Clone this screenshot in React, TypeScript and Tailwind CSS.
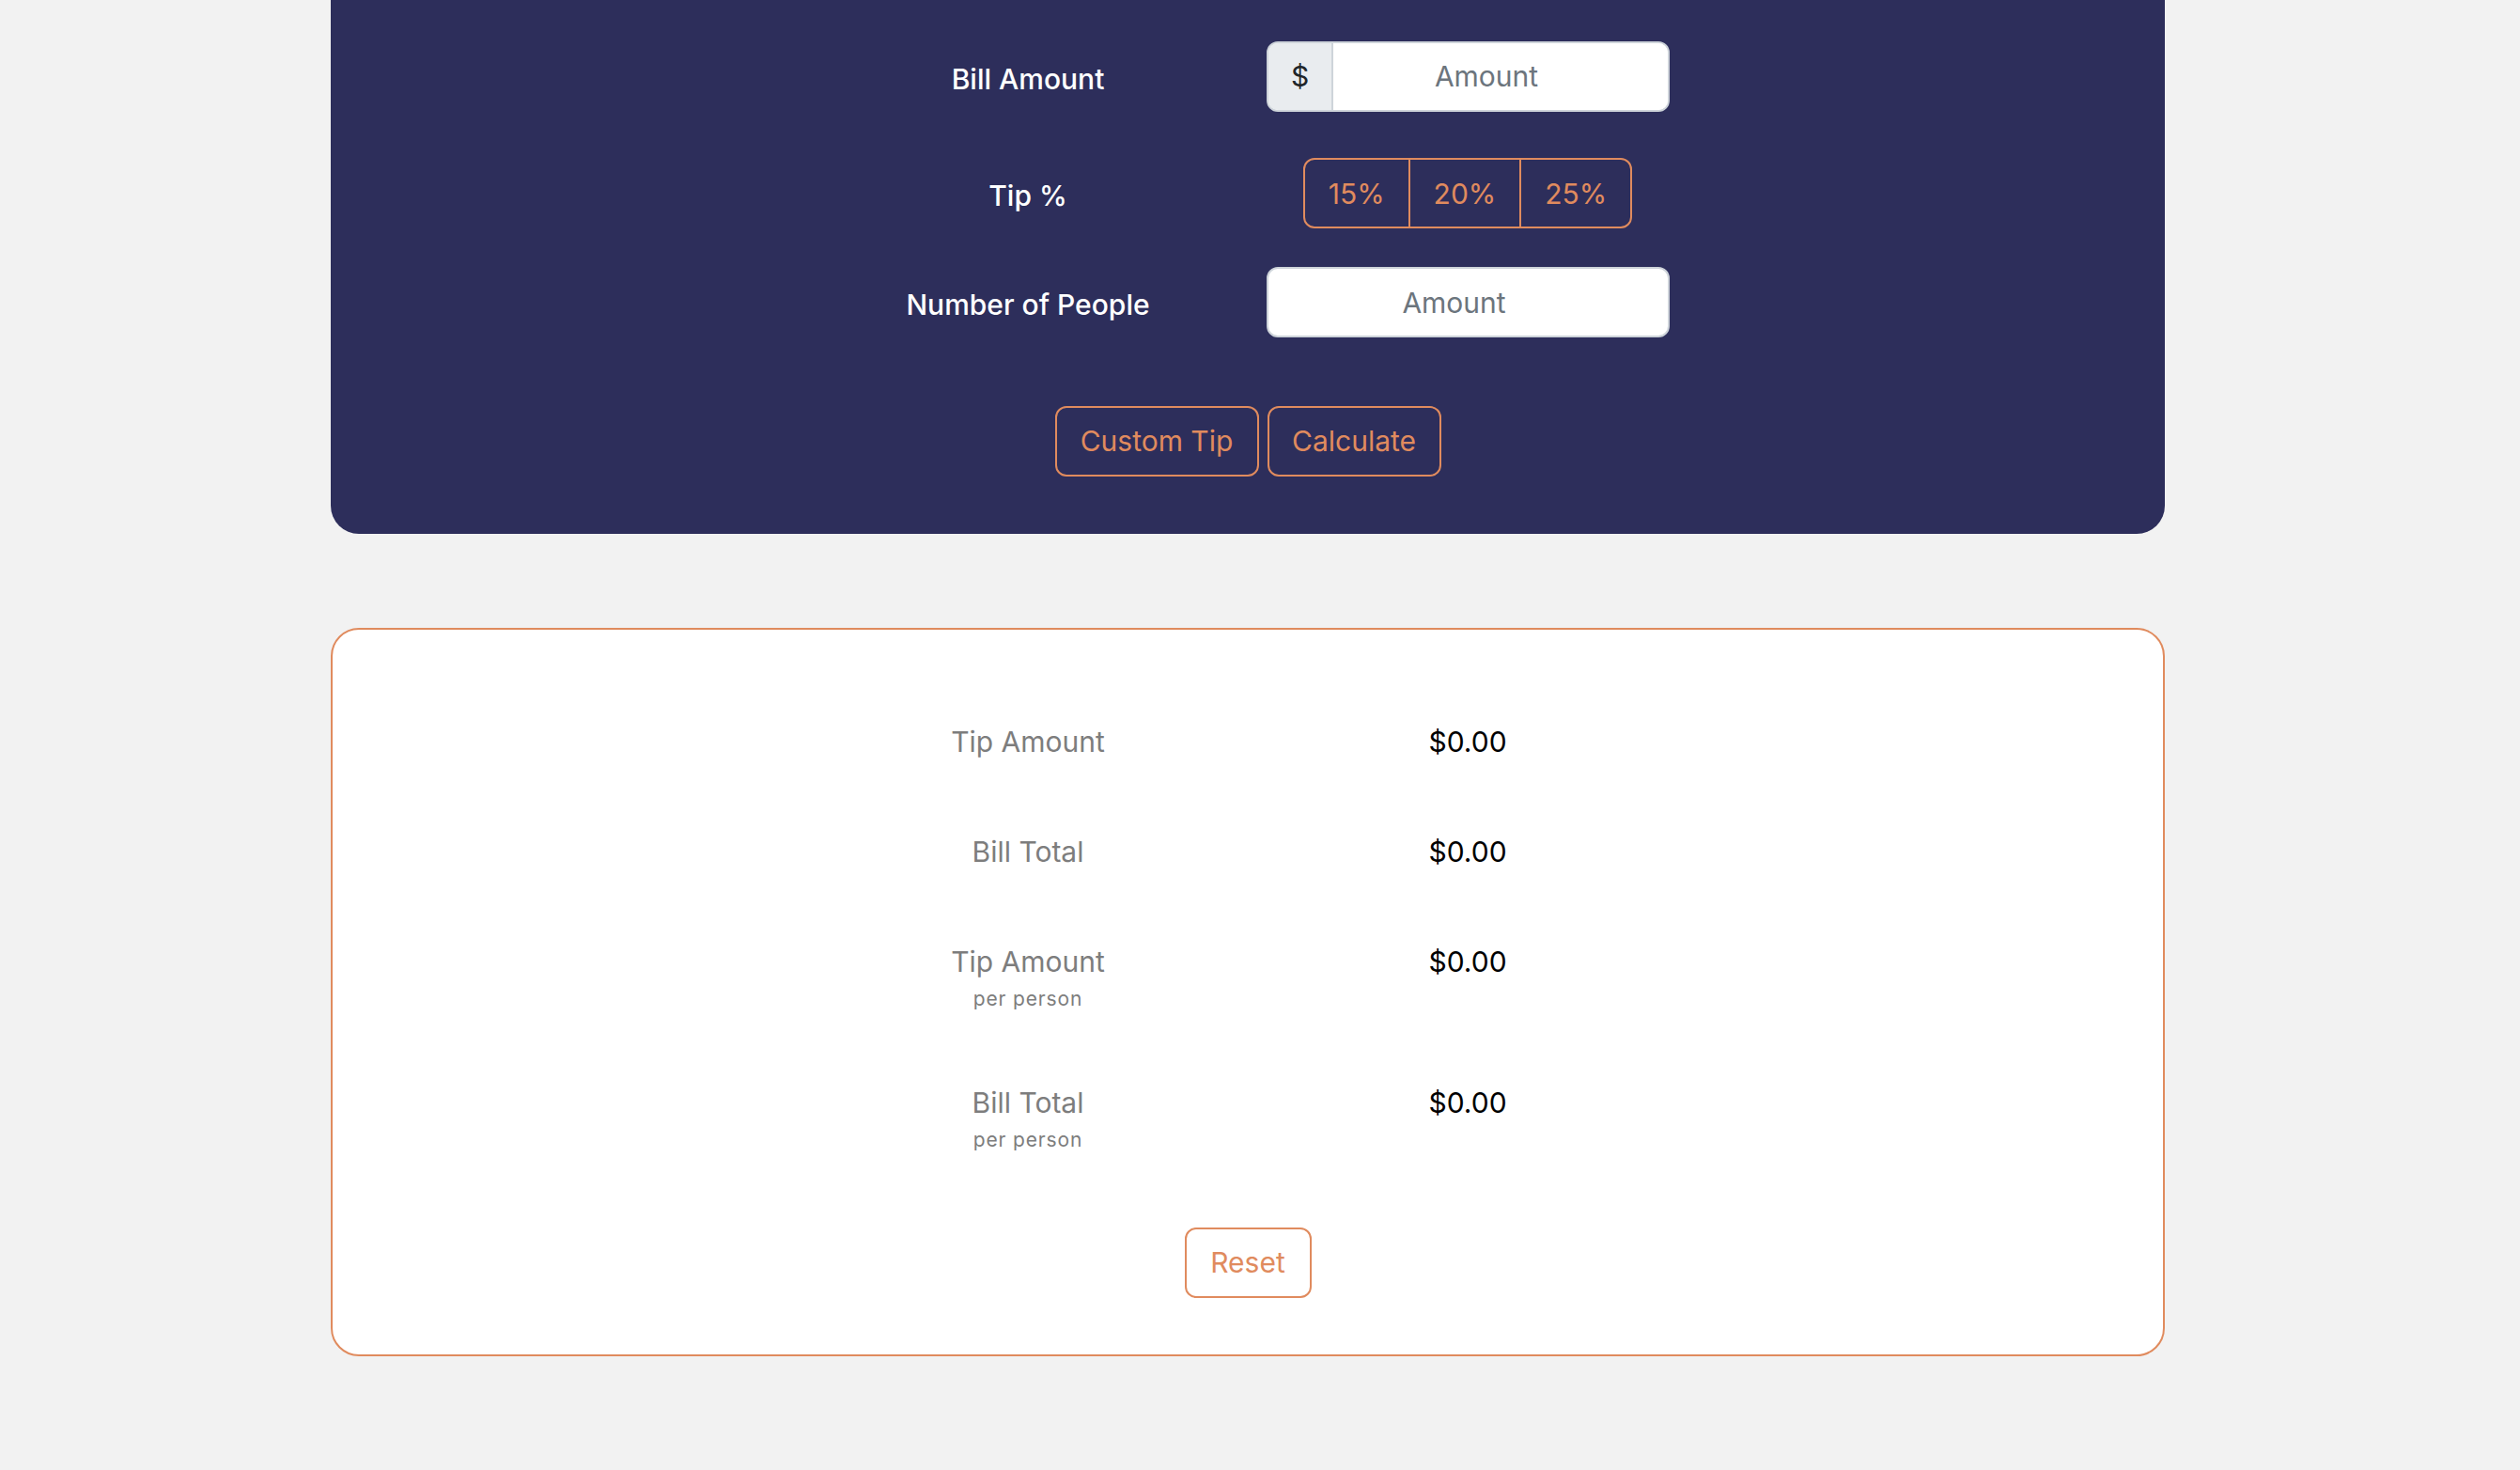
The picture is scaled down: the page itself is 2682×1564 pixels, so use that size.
const orange = 'border-[#e08b5e] text-[#e08b5e]'

const ResultRow = ({ label, sub, value }: { label: string; sub?: string; value: string }) => (
  <div className="grid grid-cols-2 items-start">
    <div className="flex flex-col items-center">
      <span className="text-[30px] leading-[45px] text-[#7d7d7d]">{label}</span>
      {sub && <span className="text-[21px] leading-[33px] tracking-[0.04em] text-[#7d7d7d]">{sub}</span>}
    </div>
    <div className="text-center text-[30px] leading-[45px] text-black">{value}</div>
  </div>
)

const App = () => {
  return (
    <div className="min-h-screen bg-[#f2f2f2] font-['Inter','Noto_Sans',sans-serif]">
      {/* Form panel */}
      <div className="ml-[352px] w-[1952px] rounded-b-[30px] bg-[#2d2e5b] pt-[44px] pb-[61px]">
        <div className="mx-auto w-[936px]">
          <div className="grid grid-cols-2 items-center">
            <div className="pt-[6px] text-center text-[30px] font-medium text-white">Bill Amount</div>
            <div className="px-[20px]">
              <div className="flex h-[75px] w-[429px] overflow-hidden rounded-[12px] border-2 border-[#ced4da] bg-white">
                <span className="flex w-[69px] items-center justify-center border-r-2 border-[#ced4da] bg-[#e9ecef] text-[30px] text-[#212529]">
                  $
                </span>
                <input
                  type="text"
                  placeholder="Amount"
                  className="min-w-0 flex-1 bg-white pr-[30px] text-center text-[30px] text-[#212529] outline-none placeholder:text-[#6c757d]"
                />
              </div>
            </div>
          </div>

          <div className="mt-[49px] grid grid-cols-2 items-center">
            <div className="pt-[6px] text-center text-[30px] font-medium text-white">Tip %</div>
            <div className="flex justify-center">
              <div className={`flex h-[75px] overflow-hidden rounded-[12px] border-2 ${orange}`}>
                {['15%', '20%', '25%'].map((t, i) => (
                  <button
                    key={t}
                    className={`px-[25px] pt-[2px] text-[30px] text-[#e08b5e] ${i > 0 ? 'border-l-2 border-[#e08b5e]' : ''}`}
                  >
                    {t}
                  </button>
                ))}
              </div>
            </div>
          </div>

          <div className="mt-[41px] grid grid-cols-2 items-center">
            <div className="pt-[6px] text-center text-[30px] font-medium text-white">Number of People</div>
            <div className="px-[20px]">
              <input
                type="text"
                placeholder="Amount"
                className="h-[75px] w-[429px] rounded-[12px] border-2 border-[#ced4da] bg-white pr-[30px] text-center text-[30px] text-[#212529] outline-none placeholder:text-[#6c757d]"
              />
            </div>
          </div>
        </div>

        <div className="mt-[73px] flex justify-center gap-[9px]">
          <button className={`h-[75px] w-[217px] rounded-[12px] border-2 text-[30px] ${orange}`}>Custom Tip</button>
          <button className={`h-[75px] w-[185px] rounded-[12px] border-2 text-[30px] ${orange}`}>Calculate</button>
        </div>
      </div>

      {/* Results card */}
      <div className="mt-[100px] ml-[352px] w-[1952px] rounded-[30px] border-2 border-[#e08b5e] bg-white pt-[97px] pb-[60px]">
        <div className="mx-auto flex w-[936px] flex-col gap-[72px]">
          <ResultRow label="Tip Amount" value="$0.00" />
          <ResultRow label="Bill Total" value="$0.00" />
          <ResultRow label="Tip Amount" sub="per person" value="$0.00" />
          <ResultRow label="Bill Total" sub="per person" value="$0.00" />
        </div>
        <div className="mt-[77px] flex justify-center">
          <button className={`h-[75px] w-[135px] rounded-[12px] border-2 text-[30px] ${orange}`}>Reset</button>
        </div>
      </div>
    </div>
  )
}

export default App
